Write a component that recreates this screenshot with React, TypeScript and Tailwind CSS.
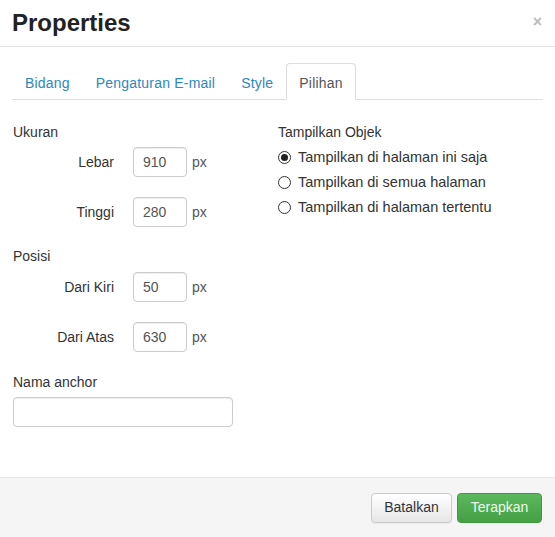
import { useState } from 'react';

const TABS = ['Bidang', 'Pengaturan E-mail', 'Style', 'Pilihan'];

const RADIOS = [
  'Tampilkan di halaman ini saja',
  'Tampilkan di semua halaman',
  'Tampilkan di halaman tertentu',
];

function NumRow({ label, value }: { label: string; value: string }) {
  return (
    <div className="flex items-center h-[30px]">
      <div className="w-[101px] text-right">{label}</div>
      <div className="ml-[19px] w-[54px] h-[30px] border border-[#ccc] rounded-[4px] shadow-[inset_0_1px_1px_rgba(0,0,0,0.075)] flex items-center px-[9px] text-[#555]">
        {value}
      </div>
      <div className="ml-[5px] text-[#555]">px</div>
    </div>
  );
}

export default function App() {
  const [tab, setTab] = useState('Pilihan');
  const [pick, setPick] = useState(0);

  return (
    <div
      className="w-[555px] h-[537px] bg-white flex flex-col text-[14px] text-[#333]"
      style={{ fontFamily: '"Liberation Sans", Arial, sans-serif' }}
    >
      {/* header */}
      <div className="h-[47px] flex-shrink-0 flex items-center justify-between pl-[12px] pr-[13px] border-b border-[#e5e5e5]">
        <h1 className="text-[24px] font-bold text-[#222] leading-none -mt-[1px]">Properties</h1>
        <span className="text-[#bbb] text-[16px] font-bold leading-none -mt-[3px]">×</span>
      </div>

      {/* tabs */}
      <div className="pt-[16px] px-[12px]">
        <div className="flex border-b border-[#ddd] h-[37px]">
          {TABS.map((t) => (
            <button
              key={t}
              onClick={() => setTab(t)}
              className={`px-[12px] pt-[3px] h-[37px] tracking-[0.2px] rounded-t-[4px] border -mb-px ${
                tab === t
                  ? 'border-[#ddd] border-b-white bg-white text-[#555]'
                  : 'border-transparent text-[#2e87bf]'
              }`}
            >
              {t}
            </button>
          ))}
        </div>
      </div>

      {/* body */}
      <div className="flex-1 flex pl-[13px] pt-[22px]">
        <div className="w-[265px] flex flex-col">
          <div className="leading-[20px]">Ukuran</div>
          <div className="mt-[5px] flex flex-col gap-[20px]">
            <NumRow label="Lebar" value="910" />
            <NumRow label="Tinggi" value="280" />
          </div>
          <div className="leading-[20px] mt-[19px]">Posisi</div>
          <div className="mt-[6px] flex flex-col gap-[20px]">
            <NumRow label="Dari Kiri" value="50" />
            <NumRow label="Dari Atas" value="630" />
          </div>
          <div className="leading-[20px] mt-[20px]">Nama anchor</div>
          <div className="mt-[5px] w-[220px] h-[30px] border border-[#ccc] rounded-[4px] shadow-[inset_0_1px_1px_rgba(0,0,0,0.075)]" />
        </div>

        <div className="flex flex-col">
          <div className="leading-[20px]">Tampilkan Objek</div>
          <div className="mt-[3px] flex flex-col">
            {RADIOS.map((r, i) => (
              <button
                key={r}
                onClick={() => setPick(i)}
                className="flex items-center h-[25px] text-left"
              >
                <span className="w-[13px] h-[13px] rounded-full border border-[#333] flex items-center justify-center">
                  {pick === i && <span className="w-[7px] h-[7px] rounded-full bg-[#222]" />}
                </span>
                <span className="ml-[7px] text-[14.5px]">{r}</span>
              </button>
            ))}
          </div>
        </div>
      </div>

      {/* footer */}
      <div className="h-[60px] flex-shrink-0 bg-[#f5f5f5] border-t border-[#e5e5e5] flex items-center justify-end gap-[5px] pr-[13px]">
        <button className="h-[30px] w-[81px] rounded-[4px] border border-[#ccc] bg-gradient-to-b from-white to-[#e6e6e6] text-[#333] shadow-[0_1px_1px_rgba(0,0,0,0.05)]">
          Batalkan
        </button>
        <button className="h-[30px] w-[85px] rounded-[4px] border border-[#3e9a3e] bg-gradient-to-b from-[#5cb85c] to-[#45a045] text-[#eef8ee]">
          Terapkan
        </button>
      </div>
    </div>
  );
}
